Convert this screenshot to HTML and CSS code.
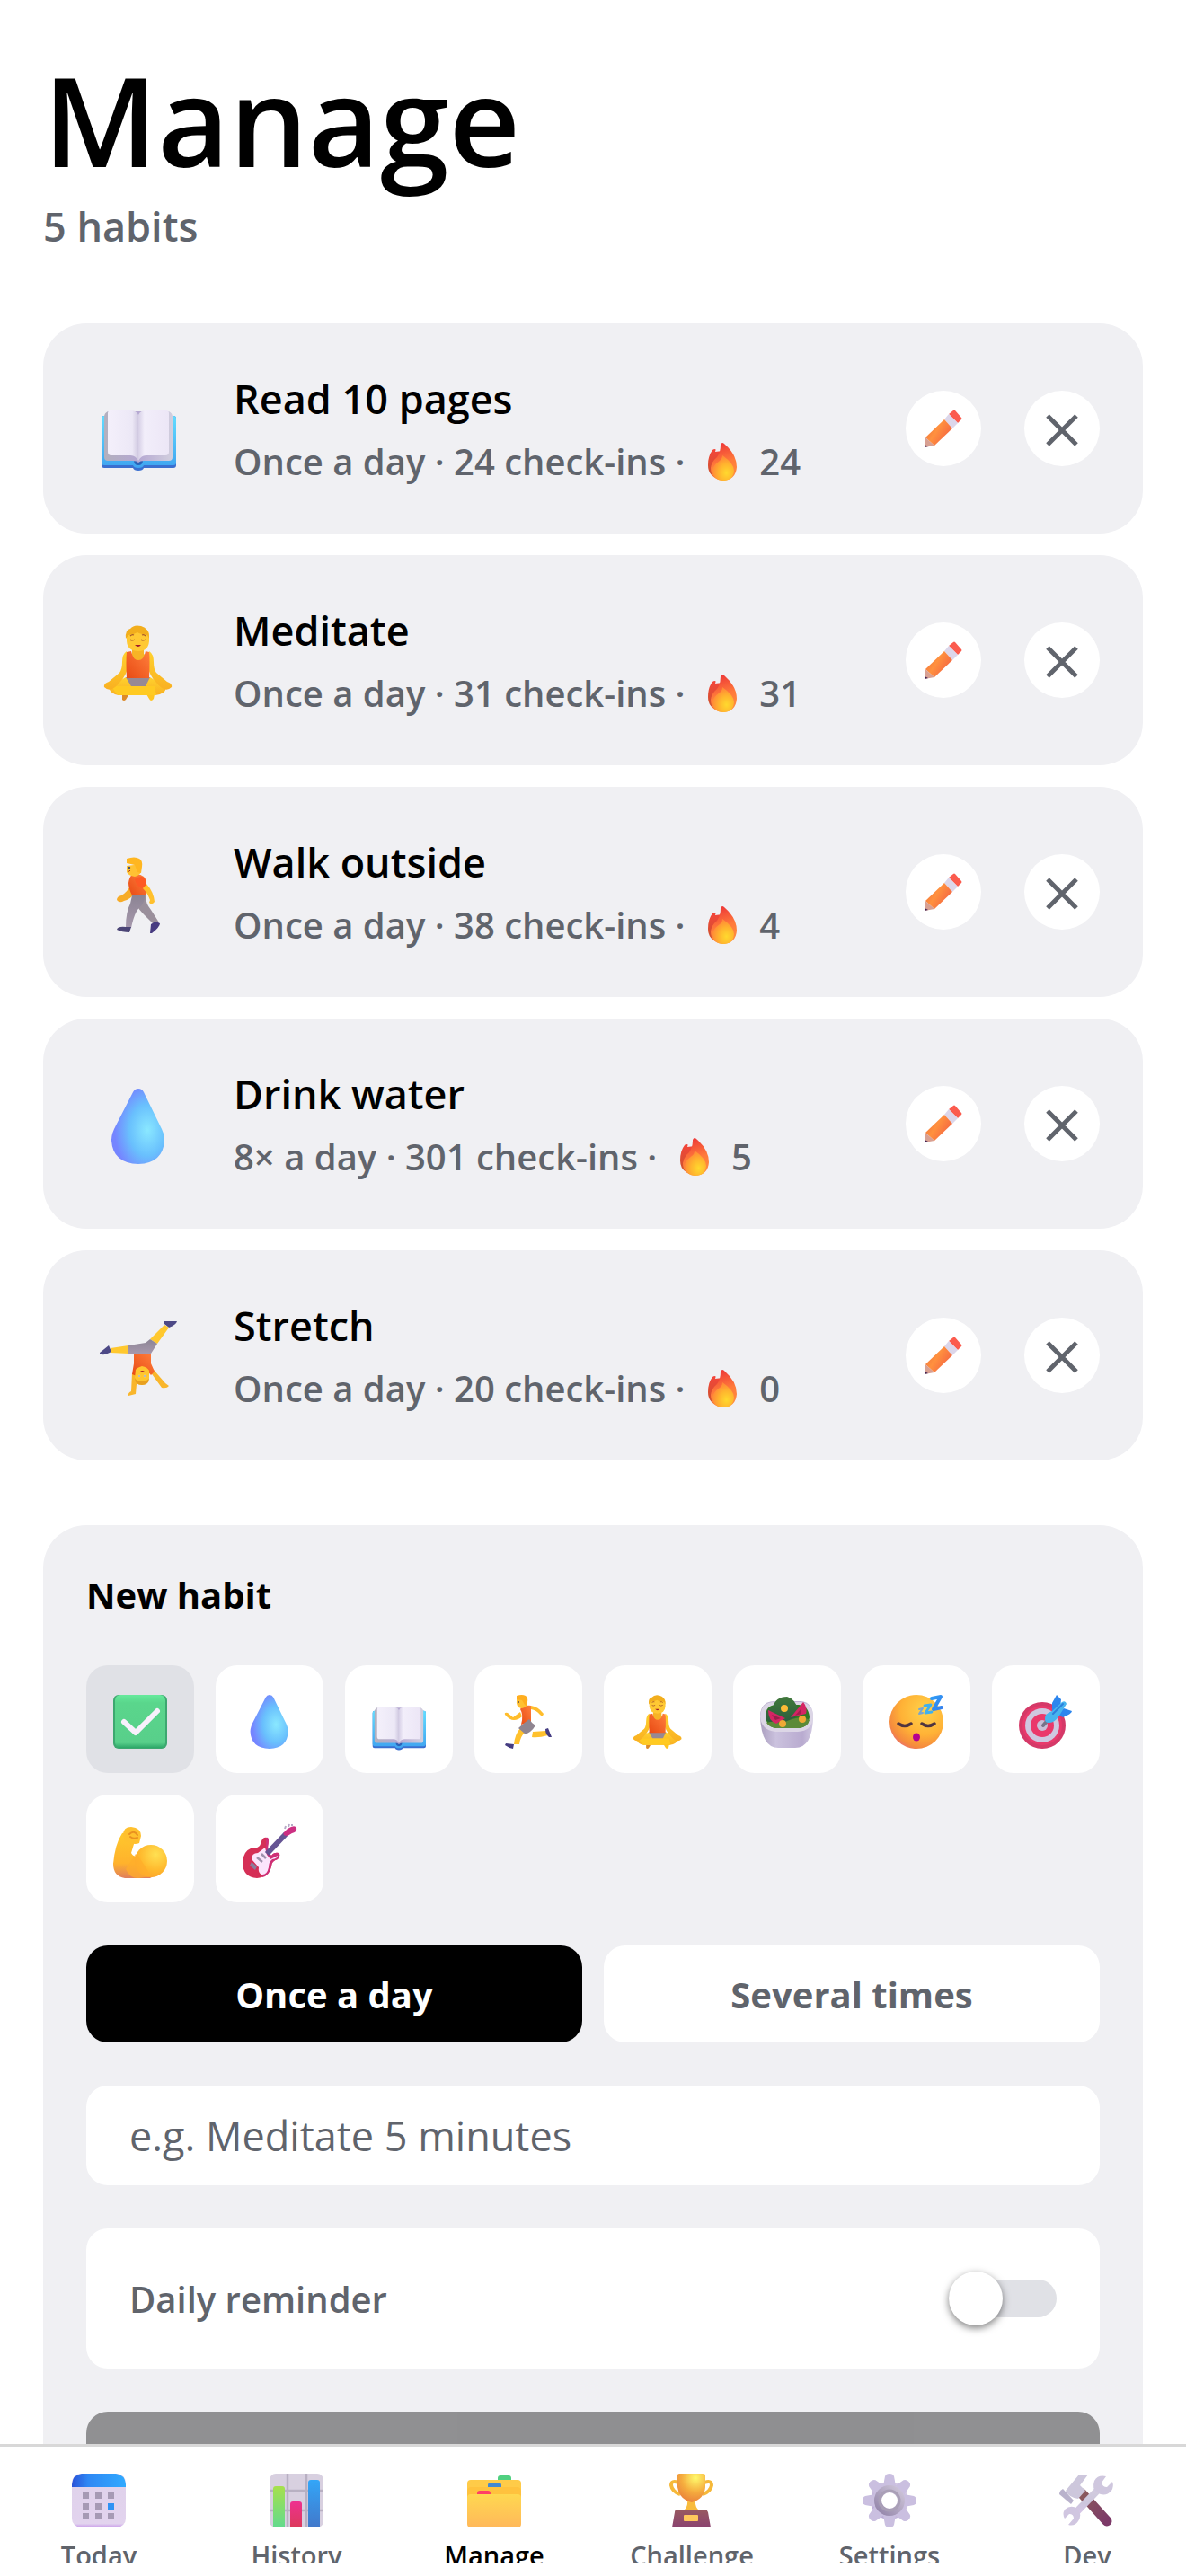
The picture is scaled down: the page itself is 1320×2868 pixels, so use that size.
FILE: index.html
```html
<!DOCTYPE html>
<html lang="en">
  <head>
    <meta charset="UTF-8" />
    <meta name="viewport" content="width=device-width, initial-scale=1.0" />
    <title>Manage habits</title>
    <link rel="stylesheet" href="styles.css">
  </head>
  <body>
    <!-- icon sprite -->
    <svg class="sprite" aria-hidden="true">
      <defs>
        <linearGradient id="g-cover" x1="0" y1="0" x2="0" y2="1"><stop offset="0" stop-color="#62dcff" /><stop offset="1" stop-color="#3fa4f0" /></linearGradient>
        <linearGradient id="g-page" x1="0" y1="0" x2="1" y2="0"><stop offset="0" stop-color="#f4f0fb" /><stop offset=".8" stop-color="#ece8f6" /><stop offset="1" stop-color="#cfc8e0" /></linearGradient>
        <linearGradient id="g-page2" x1="0" y1="0" x2="1" y2="0"><stop offset="0" stop-color="#d6cfe6" /><stop offset=".2" stop-color="#f2eefa" /><stop offset="1" stop-color="#ece6f6" /></linearGradient>
        <linearGradient id="g-edge" x1="0" y1="0" x2="1" y2="0"><stop offset="0" stop-color="#b3b0be" /><stop offset=".5" stop-color="#b5a8d2" /><stop offset="1" stop-color="#d2cfde" /></linearGradient>
        <linearGradient id="g-skin" x1="0" y1="0" x2="0" y2="1"><stop offset="0" stop-color="#ffd22e" /><stop offset="1" stop-color="#f9b021" /></linearGradient>
        <linearGradient id="g-shirt" x1="1" y1="0" x2="0" y2="1"><stop offset="0" stop-color="#ff7f3c" /><stop offset="1" stop-color="#e84a14" /></linearGradient>
        <linearGradient id="g-pants" x1="0" y1="0" x2="0" y2="1"><stop offset="0" stop-color="#8c8494" /><stop offset="1" stop-color="#a698ac" /></linearGradient>
        <radialGradient id="g-drop" cx=".68" cy=".55" r=".62"><stop offset="0" stop-color="#8ae8ff" /><stop offset=".55" stop-color="#69c0fd" /><stop offset="1" stop-color="#7585ff" /></radialGradient>
        <linearGradient id="g-fire" x1=".5" y1="0" x2=".7" y2="1"><stop offset="0" stop-color="#ee3a38" /><stop offset=".5" stop-color="#ff7a3a" /><stop offset="1" stop-color="#ff9040" /></linearGradient>
        <linearGradient id="g-fire2" x1="0" y1="0" x2="0" y2="1"><stop offset="0" stop-color="#f4453a" /><stop offset="1" stop-color="#c8552c" /></linearGradient>
        <radialGradient id="g-fire3" cx=".65" cy=".7" r=".7"><stop offset="0" stop-color="#ffd92e" /><stop offset=".5" stop-color="#ffb52e" /><stop offset="1" stop-color="#ff8438" /></radialGradient>
        <linearGradient id="g-pencil" x1="0" y1=".2" x2="1" y2=".8"><stop offset="0" stop-color="#f0703a" /><stop offset=".4" stop-color="#ff913f" /><stop offset="1" stop-color="#f25a42" /></linearGradient>
        <linearGradient id="g-check" x1="0" y1="0" x2="0" y2="1"><stop offset="0" stop-color="#66ea9c" /><stop offset=".15" stop-color="#5ad68c" /><stop offset=".9" stop-color="#58cf8a" /><stop offset="1" stop-color="#2ca768" /></linearGradient>
        <linearGradient id="g-bowl" x1="0" y1="0" x2="1" y2="0"><stop offset="0" stop-color="#ab9fc0" /><stop offset=".3" stop-color="#cbc2de" /><stop offset=".8" stop-color="#b9abd0" /><stop offset="1" stop-color="#d2cae2" /></linearGradient>
        <linearGradient id="g-leaf" x1="0" y1="0" x2="0" y2="1"><stop offset="0" stop-color="#41793c" /><stop offset="1" stop-color="#2a5c3c" /></linearGradient>
        <radialGradient id="g-face" cx=".65" cy=".3" r=".8"><stop offset="0" stop-color="#ffd24a" /><stop offset=".55" stop-color="#ffb236" /><stop offset=".85" stop-color="#f58a3e" /><stop offset="1" stop-color="#e86a7c" /></radialGradient>
        <linearGradient id="g-zed" x1="0" y1="0" x2="1" y2="1"><stop offset="0" stop-color="#2f9cf5" /><stop offset="1" stop-color="#3480ee" /></linearGradient>
        <linearGradient id="g-arm" x1="0" y1="0" x2="0" y2="1"><stop offset="0" stop-color="#ffcb2d" /><stop offset=".7" stop-color="#ffb22c" /><stop offset="1" stop-color="#e07f5c" /></linearGradient>
        <radialGradient id="g-bicep" cx=".65" cy=".3" r=".7"><stop offset="0" stop-color="#ffe052" /><stop offset=".7" stop-color="#ffb92d" /><stop offset="1" stop-color="#fca92c" /></radialGradient>
        <linearGradient id="g-calhead" x1="0" y1="0" x2="1" y2="0"><stop offset="0" stop-color="#2a52d8" /><stop offset=".3" stop-color="#2f88f4" /><stop offset="1" stop-color="#30aaff" /></linearGradient>
        <linearGradient id="g-cal" x1="0" y1="0" x2="0" y2="1"><stop offset="0" stop-color="#dfd2ea" /><stop offset=".93" stop-color="#e2d3ee" /><stop offset="1" stop-color="#c797ea" /></linearGradient>
        <linearGradient id="g-barg" x1="0" y1="0" x2="0" y2="1"><stop offset="0" stop-color="#a6e04c" /><stop offset="1" stop-color="#62da8e" /></linearGradient>
        <linearGradient id="g-barr" x1="0" y1="0" x2="0" y2="1"><stop offset="0" stop-color="#ee3190" /><stop offset="1" stop-color="#dc3a5a" /></linearGradient>
        <linearGradient id="g-barb" x1="0" y1="0" x2="0" y2="1"><stop offset="0" stop-color="#33a6f8" /><stop offset="1" stop-color="#4278ca" /></linearGradient>
        <linearGradient id="g-folder" x1="0" y1="0" x2="0" y2="1"><stop offset="0" stop-color="#ffd850" /><stop offset="1" stop-color="#ffb85a" /></linearGradient>
        <radialGradient id="g-cup" cx=".65" cy=".15" r=".9"><stop offset="0" stop-color="#fffa6c" /><stop offset=".55" stop-color="#f5ac3e" /><stop offset="1" stop-color="#e97e3c" /></radialGradient>
        <linearGradient id="g-base" x1="0" y1="0" x2="0" y2="1"><stop offset="0" stop-color="#985a60" /><stop offset="1" stop-color="#8a4270" /></linearGradient>
        <linearGradient id="g-gear" x1="1" y1="0" x2="0" y2="1"><stop offset="0" stop-color="#dad2e8" /><stop offset="1" stop-color="#b7a6d4" /></linearGradient>
        <linearGradient id="g-hub" x1="1" y1="0" x2="0" y2="1"><stop offset="0" stop-color="#cdc4d8" /><stop offset="1" stop-color="#9486aa" /></linearGradient>
        <linearGradient id="g-handle" x1="0" y1="0" x2="1" y2="1"><stop offset="0" stop-color="#8b5a5c" /><stop offset="1" stop-color="#7c3968" /></linearGradient>
        <linearGradient id="g-wrench" x1="0" y1="0" x2="0" y2="1"><stop offset="0" stop-color="#d4cfdf" /><stop offset=".6" stop-color="#ccc5dc" /><stop offset="1" stop-color="#d8c6ea" /></linearGradient>
      </defs>

      <symbol id="i-book" viewBox="0 0 84 84">
        <path d="M1 28q0-3 3-3h77q3 0 3 3v52q0 3-3 3H48q-1 3-6 3t-6-3H4q-3 0-3-3z" fill="#3a6fd0" />
        <path d="M1 28q0-3 3-3h77q3 0 3 3v49q0 3-3 3H48q-1 3-6 3t-6-3H4q-3 0-3-3z" fill="url(#g-cover)" />
        <path d="M37 74h10q0 6-5 6t-5-6z" fill="#2b62b8" />
        <path d="M4 26q0-4 4-6h68q4 2 4 6v45q0 4-4 4H48q-4 0-6 2-2-2-6-2H8q-4 0-4-4z" fill="url(#g-edge)" />
        <path d="M8 22q0-3 3-3h22q7 0 9 5v51q-3-6-9-6H12q-4 0-4-4z" fill="url(#g-page)" />
        <path d="M76 22q0-3-3-3H51q-7 0-9 5v51q3-6 9-6h21q4 0 4-4z" fill="url(#g-page2)" />
      </symbol>

      <symbol id="i-meditate" viewBox="0 0 84 84">
        <path d="M24 78h7l-3 5q-2 2-4 0z" fill="#dc8a28" />
        <path d="M51 77h9l-1 5q-3 4-5 0z" fill="#ffc521" />
        <path d="M28 58h27l18 11q-1 8-12 9H20q-9-1-11-9z" fill="url(#g-skin)" />
        <path d="M28 58h27l-5 10H34z" fill="#978994" />
        <path d="M13 68h47l2 10H20q-4-1-7-10z" fill="#ffca22" />
        <path d="M29 29q-5 3-5 12 0 8-3 12L9 63q-6 2-5 6 4 4 9 2 4-2 8-7 8-8 10-20z" fill="url(#g-skin)" />
        <path d="M54 29q5 3 5 12 0 8 3 12l12 10q6 2 5 6-4 4-9 2-4-2-8-7-8-8-10-20z" fill="url(#g-skin)" />
        <path d="M35 24h13v8l5 4q-11 8-23 0l5-4z" fill="#f7b426" />
        <path d="M29 30l5-1q2 10 8 10t8-10l4 1q1 8 0 29H29q-1-20 0-29z" fill="url(#g-shirt)" />
        <path d="M29 11q0-8 13-8 12 0 12 8v7q-1 11-12 11-12 0-13-11z" fill="#ffc933" />
        <path d="M28 15Q27 5 33 4q4-5 12-3 9 2 9 14l-2-4q-8-1-11-3-5 3-10 3z" fill="#f2ae1d" />
        <path d="M33 16q2 2 5 0m7 0q2 2 5 0M33 12q2-2 4-1m9 0q2-1 4 1" fill="none" stroke="#a8582a" stroke-width="1.2" />
        <path d="M38 22h7q-3 4-7 0z" fill="#a01c2a" />
      </symbol>

      <symbol id="i-walk" viewBox="0 0 84 84">
        <path d="M33 32l6 7q-5 8-13 10-5 3-8-1 0-4 5-5 7-4 10-11z" fill="#f7ac28" />
        <path d="M40 43h10q0 9 6 16l9 14-4 4-14-14q-7-7-10-16z" fill="#9a8f9b" />
        <path d="M35 43h14q0 8-5 13-6 4-10 23h-6q0-18 5-27z" fill="url(#g-pants)" />
        <path d="M28 78h6l-2 6q-8 0-14-3 1-4 10-3z" fill="#4b4576" />
        <path d="M61 72l5 2q0 4-9 11h-2l1-10z" fill="#473b80" />
        <path d="M35 20q8-2 13 2 4 4 2 11v10H35q-4-8-4-14 1-7 4-9z" fill="url(#g-shirt)" />
        <path d="M51 30q8 9 9 20-3 4-6 1l1-3q-3-8-8-13z" fill="#ffc02c" />
        <path d="M38 25q12-8 13 6l-5 4q-6-2-8-10z" fill="#fd5a25" />
        <path d="M29 10l16-2v9q-2 4-7 5-7-1-9-5z" fill="#ffc233" />
        <path d="M29 2q9-3 14 0 4 2 3 9l-1 7-4-1-3-8-9-2z" fill="#ffb620" />
        <circle cx="32" cy="12" r="1.2" fill="#40506a" />
        <path d="M30 16q2 1 3-1" fill="none" stroke="#a03020" />
      </symbol>

      <symbol id="i-drop" viewBox="0 0 84 84">
        <path d="M42 0q4 0 6 4l18 37q5 9 5 16-1 26-29 27Q13 83 12 57q0-7 5-16L36 4q2-4 6-4z" fill="url(#g-drop)" />
      </symbol>

      <symbol id="i-stretch" viewBox="0 0 84 84">
        <path d="M71 1h14q-1 4-9 7l-5-4zM-1 36l10-8 3 7q-9 5-13 2z" fill="#4d4986" />
        <path d="M71 5l5 3-13 18-8-5zM11 31l20-3v9l-20-1z" fill="#ffc82e" />
        <path d="M55 21l8 5-7 11H31v-9l19-3z" fill="url(#g-pants)" />
        <path d="M35 59l6 1-2 22-8 2q-1-3 3-5zM55 57l4-2 13 15 4 3q-2 3-8 2z" fill="#f9b62b" />
        <path d="M37 37h19v11l4 9-4 4-5-6H41l-1 7-5-2 2-12z" fill="url(#g-shirt)" />
        <path d="M39 55q1-2 7-4 6 1 8 5v8q-2 8-8 8-7 0-8-8z" fill="#ffc62f" />
        <path d="M38 64q2 4 8 4t8-4q0 8-8 8t-8-8z" fill="#e8a020" />
        <path d="M44 57q2-2 5 0z" fill="#a82030" />
        <circle cx="43" cy="62" r="1.2" fill="#fff" /><circle cx="49" cy="62" r="1.2" fill="#fff" />
        <circle cx="43" cy="62" r=".7" fill="#3a4260" /><circle cx="49" cy="62" r=".7" fill="#3a4260" />
      </symbol>

      <symbol id="i-fire" viewBox="0 0 42 42">
        <path d="M13 7q1 0 0 3l8-1-4 31Q5 37 5 25 5 14 10 8q1-1 3-1z" fill="url(#g-fire2)" />
        <path d="M21 0q1 0 2 1 14 12 14 26-1 14-15 15Q8 41 8 28q1-7 7-12 4-5 4-14 1-2 2-2z" fill="url(#g-fire)" />
        <path d="M21 14q13 9 13 17-1 11-12 11T10 30q1-5 8-10 3-2 3-6z" fill="url(#g-fire3)" />
      </symbol>

      <symbol id="i-pencil" viewBox="0 0 42 42">
        <path d="M32 1q1-1 2 0l7 8q1 1 0 2l-4 4-10-10z" fill="#fb5b4e" />
        <path d="M27 5l10 10-6 6-9-10z" fill="#dcd6ea" />
        <path d="M22 11l9 10-20 19-10-9z" fill="url(#g-pencil)" />
        <path d="M1 31l10 9-11 2z" fill="#d8a092" />
        <path d="M0 39l4 2-4 1z" fill="#3c1f52" />
      </symbol>

      <symbol id="i-close" viewBox="0 0 36 36">
        <path d="M2 2l32 32M34 2L2 34" fill="none" stroke="#60646c" stroke-width="5" />
      </symbol>

      <symbol id="i-check" viewBox="0 0 60 60">
        <rect width="60" height="60" rx="6" fill="#3da870" />
        <rect x="2" width="56" height="59" rx="6" fill="url(#g-check)" />
        <path d="M12 30l13 12 24-24" fill="none" stroke="#f8f0fc" stroke-width="6" stroke-linecap="round" stroke-linejoin="round" />
      </symbol>

      <symbol id="i-run" viewBox="0 0 60 60">
        <path d="M21 19l-8 6-6-5q-4-1-3 2 5 6 10 6 5 0 9-4zM33 12q8 1 14 9-1 4-4 1-4-5-10-6z" fill="#ffbd2c" />
        <path d="M21 37l6 4q-6 5-7 14h-6q1-11 7-18zM35 41l15-1 2 5q-11 3-18 2z" fill="#ffc12d" />
        <path d="M5 54l9 1-1 5q-5-1-9-4zM49 38l3-1 4 10h-3q-4-3-4-9z" fill="#453d82" />
        <path d="M23 13q7-2 10-1v18l-11 3q3-11-1-17z" fill="url(#g-shirt)" />
        <path d="M31 27q3 5 7 7-3 5-6 7l-5 3-8-7q5-5 12-10z" fill="#8f8591" />
        <path d="M17 5l12-3v9q-3 4-7 4-6-1-5-10z" fill="#ffc032" />
        <path d="M17 1q6-2 10 0 3 2 2 7v5l-3-2-3-5-6-1z" fill="#ffae1f" />
        <circle cx="19" cy="8" r=".9" fill="#3f3a50" />
      </symbol>

      <symbol id="i-salad" viewBox="0 0 60 60">
        <path d="M0 25q0-17 15-18h30q14 1 14 18-1 34-20 34H20Q2 59 0 25z" fill="url(#g-bowl)" />
        <path d="M0 24Q1 8 16 8h28q15 1 15 17-1 15-17 16H17Q1 39 0 24z" fill="#dcd6e6" />
        <path d="M6 24q0-12 11-13h26q11 1 12 14-1 11-12 12H18Q7 36 6 24z" fill="#2f7a22" />
        <path d="M6 24q2-11 8-10 3-12 16-12 9 2 13 16L36 31H12q-6-2-6-7z" fill="url(#g-leaf)" />
        <path d="M7 31q10-3 18 1 10-7 24-7l6 3q-2 8-12 9H18q-8-1-11-6z" fill="#5c8a38" />
        <path d="M9 17l19 9-10 6q-9-3-9-15z" fill="#d42564" /><path d="M13 22l10 4-6 2z" fill="#981f49" />
        <path d="M48 8q5 6 3 13l-17 4z" fill="#d42564" /><path d="M46 15v6l-7 2z" fill="#a31f4e" />
        <circle cx="27" cy="15" r="4" fill="#fdbb36" /><circle cx="25" cy="32" r="4" fill="#efa935" /><circle cx="47" cy="27" r="4" fill="#efa935" />
      </symbol>

      <symbol id="i-sleep" viewBox="0 0 60 60">
        <circle cx="30" cy="30" r="30" fill="url(#g-face)" />
        <path d="M10 32q7 5 14 0M36 32q7 5 14 0" fill="none" stroke="#4f3440" stroke-width="3.4" stroke-linecap="round" />
        <ellipse cx="30" cy="47" rx="4" ry="4.5" fill="#b5008e" />
        <g fill="none" stroke-linejoin="round" stroke-linecap="round">
          <path d="M47 4l10-2-8 14 9-2" stroke="url(#g-zed)" stroke-width="4" />
          <path d="M39 12l7-1-6 9 7-1" stroke="#3fb0ee" stroke-width="2.8" />
          <path d="M33 16l4-1-4 6 4-1" stroke="#79a5d2" stroke-width="2" />
        </g>
      </symbol>

      <symbol id="i-target" viewBox="0 0 60 60">
        <circle cx="26" cy="34" r="26" fill="#d53968" />
        <circle cx="26" cy="34" r="22" fill="#e83a6c" />
        <circle cx="26" cy="34" r="19" fill="#cfc7e0" />
        <circle cx="26" cy="34" r="13" fill="#ea386b" />
        <circle cx="26" cy="34" r="6" fill="#c9bfd8" />
        <path d="M27 34l6-7" stroke="#77738a" stroke-width="4" stroke-linecap="round" />
        <path d="M42 0l5 5-1 9-9 5V9zM50 15l9 3q0 3-10 7l-8-4z" fill="#2d86ee" />
        <path d="M29 27q-1-6 8-9l11-10q4-2 5 2l-8 13q-6 9-12 8-4 0-4-4z" fill="#47b4ee" />
        <path d="M49 10L38 21" stroke="#2c7fdc" stroke-width="2" stroke-linecap="round" />
      </symbol>

      <symbol id="i-muscle" viewBox="0 0 60 60">
        <path d="M14 9q6-8 13 0l-7 23q4 8 30 8 8 12-9 20H13Q0 58 0 44q2-22 10-34z" fill="url(#g-arm)" />
        <circle cx="42" cy="41" r="18" fill="url(#g-bicep)" />
        <path d="M14 50l11-17q5 4 17 25L28 60q-10 0-14-10z" fill="#ffae2b" opacity=".75" />
        <path d="M11 12q0-9 9-9 11 1 11 10l-2 8q-4 2-10 0l-6-2z" fill="#ffc02e" />
        <path d="M18 11q5-5 9 1m-8 2q4 3 8 1" fill="none" stroke="#ea9120" stroke-width="2" stroke-linecap="round" />
      </symbol>

      <symbol id="i-guitar" viewBox="0 0 60 60">
        <path d="M47 5l1-3M51 3l1-3M55 2V0" stroke="#b5aac6" stroke-width="2" />
        <path d="M0 42q1-12 9-15 10 0 11-5 2-9 7-7 3 2 1 9l-1 8 5 3q3-4 8-3 3 2-1 7-7 2-7 8-3 12-16 13Q0 59 0 42z" fill="#d52f56" />
        <path d="M26 15q3-1 3 3l-1 11 4 6q3-4 8-3 3 2-1 7-7 2-7 8-2 10-10 12l4-30z" fill="#cf2f76" />
        <path d="M10 39q0-7 7-7l8-6 2 8 4 5 8-4q0 3-6 4-4 3-4 9-2 9-8 8-4-2-3-8z" fill="#fbe5fc" />
        <path d="M27 33L48 11" stroke="#655493" stroke-width="6" />
        <path d="M46 9l4-4q8-5 10-1 1 5-5 6l-5 3q-6 0-4-4z" fill="#cc2f82" />
        <path d="M10 42l6 5-2 4-6-5z" fill="#8a7e9b" />
        <path d="M16 37l6 5M21 33l5 5" stroke="#9f92ad" stroke-width="2.5" />
      </symbol>

      <symbol id="i-calendar" viewBox="0 0 60 60">
        <rect width="60" height="60" rx="10" fill="url(#g-cal)" />
        <path d="M0 15V12Q1 1 11 0h38q10 1 11 12v3z" fill="url(#g-calhead)" />
        <path d="M12 21h7v7h-7zM26 21h7v7h-7zM40 21h7v7h-7zM12 33h7v7h-7zM26 33h7v7h-7zM12 44h7v7h-7zM26 44h7v7h-7zM40 44h7v7h-7z" fill="#a69ab4" />
        <path d="M40 33h7v7h-7z" fill="#2f92f4" />
      </symbol>

      <symbol id="i-chart" viewBox="0 0 60 60">
        <rect width="60" height="60" rx="7" fill="#d8d0e0" />
        <path d="M20 0v60M41 0v60M0 19h60M0 41h60" stroke="#b8b0c2" stroke-width="2.5" />
        <path d="M4 60V17q0-3 3-3h7q3 0 3 3v43z" fill="url(#g-barg)" />
        <path d="M23 60V34q0-3 3-3h7q3 0 3 3v26z" fill="url(#g-barr)" />
        <path d="M43 60V10q0-3 3-3h7q3 0 3 3v50z" fill="url(#g-barb)" />
      </symbol>

      <symbol id="i-folder" viewBox="0 0 60 60">
        <path d="M34 8V5q0-3 3-3h9q3 0 3 3v3z" fill="#50d080" />
        <rect y="7" width="60" height="30" rx="4" fill="#ffcb48" />
        <path d="M23 16v-3q0-3 3-3h9q3 0 3 3v3z" fill="#4288d2" />
        <path d="M0 19q1-4 4-4h52q3 0 4 4v10H0z" fill="#ffc23e" />
        <path d="M11 25v-3q0-3 3-3h9q3 0 3 3v3z" fill="#ff3f66" />
        <rect y="23" width="60" height="37" rx="4" fill="url(#g-folder)" />
      </symbol>

      <symbol id="i-trophy" viewBox="0 0 60 60">
        <path d="M15 10q-8-3-8 3 1 7 10 10M44 10q8-3 8 3-1 7-10 10" fill="none" stroke="#f6b93a" stroke-width="4" />
        <path d="M25 29h9q-1 8 4 12H21q5-4 4-12z" fill="#f8bb3c" />
        <path d="M14 2q0-2 2-2h26q3 0 3 2v13q-1 13-15 17-14-3-16-17z" fill="url(#g-cup)" />
        <path d="M11 43q0-3 3-3h31q2 0 3 3l3 17H8z" fill="url(#g-base)" />
        <rect x="21" y="46" width="16" height="7" rx="1" fill="#ffc75c" />
      </symbol>

      <symbol id="i-gear" viewBox="0 0 60 60">
        <g fill="#cabfe0">
          <circle cx="30" cy="30" r="21" fill="url(#g-gear)" />
          <path id="tooth" d="M23 14l2-11q1-3 5-3t5 3l2 11z" />
          <use href="#tooth" transform="rotate(45 30 30)" />
          <use href="#tooth" transform="rotate(90 30 30)" />
          <use href="#tooth" transform="rotate(135 30 30)" />
          <use href="#tooth" transform="rotate(180 30 30)" />
          <use href="#tooth" transform="rotate(225 30 30)" />
          <use href="#tooth" transform="rotate(270 30 30)" />
          <use href="#tooth" transform="rotate(315 30 30)" />
        </g>
        <circle cx="30" cy="30" r="13" fill="#fff" stroke="url(#g-hub)" stroke-width="8" />
        <circle cx="30" cy="30" r="11" fill="none" stroke="#a99fb6" stroke-width="3" />
      </symbol>

      <symbol id="i-tools" viewBox="0 0 60 60">
        <path d="M24 22l28 31" stroke="url(#g-handle)" stroke-width="11" stroke-linecap="round" />
        <path d="M21 1h10l-9 12 6 6-8 9q-10-1-14-9z" fill="#cdc7dc" />
        <path d="M3 17l12 13-3 4L-1 23q0-4 4-6z" fill="#b9b2cc" />
        <path d="M15 46L46 14" stroke="url(#g-wrench)" stroke-width="8" />
        <path d="M51 3q-9-2-13 5-3 9 3 13 9 6 16-2 3-5 1-10l-6 6q-5 0-6-5z" fill="#cfc7de" />
        <path d="M9 57q7 2 11-4 5-8-1-14-7-5-14 1-3 5 0 10l5-5q5 0 5 5z" fill="#d0c6e0" />
      </symbol>
    </svg>

    <main class="screen">
      <header class="page-header">
        <h1>Manage</h1>
        <p>5 habits</p>
      </header>

      <ul class="habit-list">
        <li class="habit">
          <svg class="habit-icon"><use href="#i-book" /></svg>
          <div class="habit-text">
            <h2>Read 10 pages</h2>
            <p>Once a day · 24 check-ins · <svg class="fire"><use href="#i-fire" /></svg> 24</p>
          </div>
          <div class="habit-actions">
            <button class="round-button" aria-label="Edit Read 10 pages"><svg class="pencil"><use href="#i-pencil" /></svg></button>
            <button class="round-button" aria-label="Delete Read 10 pages"><svg class="close"><use href="#i-close" /></svg></button>
          </div>
        </li>
        <li class="habit">
          <svg class="habit-icon"><use href="#i-meditate" /></svg>
          <div class="habit-text">
            <h2>Meditate</h2>
            <p>Once a day · 31 check-ins · <svg class="fire"><use href="#i-fire" /></svg> 31</p>
          </div>
          <div class="habit-actions">
            <button class="round-button" aria-label="Edit Meditate"><svg class="pencil"><use href="#i-pencil" /></svg></button>
            <button class="round-button" aria-label="Delete Meditate"><svg class="close"><use href="#i-close" /></svg></button>
          </div>
        </li>
        <li class="habit">
          <svg class="habit-icon"><use href="#i-walk" /></svg>
          <div class="habit-text">
            <h2>Walk outside</h2>
            <p>Once a day · 38 check-ins · <svg class="fire"><use href="#i-fire" /></svg> 4</p>
          </div>
          <div class="habit-actions">
            <button class="round-button" aria-label="Edit Walk outside"><svg class="pencil"><use href="#i-pencil" /></svg></button>
            <button class="round-button" aria-label="Delete Walk outside"><svg class="close"><use href="#i-close" /></svg></button>
          </div>
        </li>
        <li class="habit">
          <svg class="habit-icon"><use href="#i-drop" /></svg>
          <div class="habit-text">
            <h2>Drink water</h2>
            <p>8× a day · 301 check-ins · <svg class="fire"><use href="#i-fire" /></svg> 5</p>
          </div>
          <div class="habit-actions">
            <button class="round-button" aria-label="Edit Drink water"><svg class="pencil"><use href="#i-pencil" /></svg></button>
            <button class="round-button" aria-label="Delete Drink water"><svg class="close"><use href="#i-close" /></svg></button>
          </div>
        </li>
        <li class="habit">
          <svg class="habit-icon"><use href="#i-stretch" /></svg>
          <div class="habit-text">
            <h2>Stretch</h2>
            <p>Once a day · 20 check-ins · <svg class="fire"><use href="#i-fire" /></svg> 0</p>
          </div>
          <div class="habit-actions">
            <button class="round-button" aria-label="Edit Stretch"><svg class="pencil"><use href="#i-pencil" /></svg></button>
            <button class="round-button" aria-label="Delete Stretch"><svg class="close"><use href="#i-close" /></svg></button>
          </div>
        </li>
      </ul>

      <form class="new-habit">
        <h2>New habit</h2>
        <div class="icon-picker">
          <button type="button" class="icon-option selected" aria-label="Check mark" aria-pressed="true"><svg><use href="#i-check" /></svg></button>
          <button type="button" class="icon-option" aria-label="Droplet"><svg><use href="#i-drop" /></svg></button>
          <button type="button" class="icon-option" aria-label="Book"><svg><use href="#i-book" /></svg></button>
          <button type="button" class="icon-option" aria-label="Running"><svg><use href="#i-run" /></svg></button>
          <button type="button" class="icon-option" aria-label="Meditation"><svg><use href="#i-meditate" /></svg></button>
          <button type="button" class="icon-option" aria-label="Salad"><svg><use href="#i-salad" /></svg></button>
          <button type="button" class="icon-option" aria-label="Sleep"><svg><use href="#i-sleep" /></svg></button>
          <button type="button" class="icon-option" aria-label="Target"><svg><use href="#i-target" /></svg></button>
          <button type="button" class="icon-option" aria-label="Muscle"><svg><use href="#i-muscle" /></svg></button>
          <button type="button" class="icon-option" aria-label="Guitar"><svg><use href="#i-guitar" /></svg></button>
        </div>
        <div class="frequency">
          <button type="button" class="frequency-button active" aria-pressed="true">Once a day</button>
          <button type="button" class="frequency-button" aria-pressed="false">Several times</button>
        </div>
        <input type="text" class="name-input" aria-label="Habit name" placeholder="e.g. Meditate 5 minutes" />
        <div class="reminder">
          <label for="reminder">Daily reminder</label>
          <input type="checkbox" role="switch" class="switch" id="reminder" />
        </div>
        <button type="submit" class="submit-button" disabled>Add habit</button>
      </form>
    </main>

    <nav class="tab-bar">
      <a href="#today"><svg><use href="#i-calendar" /></svg><span>Today</span></a>
      <a href="#history"><svg><use href="#i-chart" /></svg><span>History</span></a>
      <a href="#manage" class="current" aria-current="page"><svg><use href="#i-folder" /></svg><span>Manage</span></a>
      <a href="#challenge"><svg><use href="#i-trophy" /></svg><span>Challenge</span></a>
      <a href="#settings"><svg><use href="#i-gear" /></svg><span>Settings</span></a>
      <a href="#dev"><svg><use href="#i-tools" /></svg><span>Dev</span></a>
    </nav>
  </body>
</html>
```
FILE: styles.css
```css
* {
  box-sizing: border-box;
  margin: 0;
  padding: 0;
}

body {
  font-family: "Open Sans", "Noto Sans", sans-serif;
  font-weight: 600;
  color: #000;
  background-color: #fff;
  height: 100vh;
  display: flex;
  flex-direction: column;
}

button,
input {
  font: inherit;
  border: none;
}

button {
  cursor: pointer;
}

svg {
  display: block;
  overflow: visible;
}

symbol {
  overflow: visible;
}

.sprite {
  position: absolute;
  width: 0;
  height: 0;
}

.screen {
  flex: 1;
  min-height: 0;
  padding: 48px;
  overflow-y: auto;
  scrollbar-width: none;
}

.page-header {
  margin-bottom: 76px;
}

.page-header h1 {
  font-size: 138px;
  font-weight: 600;
  line-height: 168px;
}

.page-header p {
  margin-top: 4px;
  font-size: 45px;
  line-height: 64px;
  color: #60646c;
}

/* habit cards */
.habit-list {
  list-style: none;
  display: flex;
  flex-direction: column;
  gap: 24px;
}

.habit {
  display: flex;
  align-items: center;
  gap: 48px;
  padding: 48px;
  background-color: #f0f0f3;
  border-radius: 48px;
}

.habit-icon {
  width: 84px;
  height: 84px;
  margin: 6px 16px 0;
}

.habit-text {
  flex: 1;
  padding-top: 2px;
}

.habit-text h2 {
  font-size: 45px;
  font-weight: 600;
  line-height: 68px;
}

.habit-text p {
  margin-top: 4px;
  font-size: 40px;
  line-height: 64px;
  color: #60646c;
}

.fire {
  display: inline-block;
  width: 42px;
  height: 42px;
  margin: 0 10px;
  vertical-align: -6px;
}

.habit-actions {
  display: flex;
  gap: 48px;
}

.round-button {
  display: flex;
  align-items: center;
  justify-content: center;
  width: 84px;
  height: 84px;
  border-radius: 50%;
  background-color: #fff;
}

.pencil {
  width: 42px;
  height: 42px;
}

.close {
  width: 36px;
  height: 36px;
  margin-top: 4px;
}

/* new habit form */
.new-habit {
  display: flex;
  flex-direction: column;
  gap: 48px;
  margin-top: 72px;
  padding: 48px;
  background-color: #f0f0f3;
  border-radius: 48px;
}

.new-habit h2 {
  font-size: 40px;
  font-weight: 700;
  line-height: 60px;
}

.icon-picker {
  display: flex;
  flex-wrap: wrap;
  gap: 24px;
}

.icon-option {
  display: flex;
  align-items: center;
  justify-content: center;
  width: 120px;
  height: 120px;
  padding-top: 6px;
  border-radius: 24px;
  background-color: #fff;
}

.icon-option.selected {
  background-color: #e0e1e6;
}

.icon-option svg {
  width: 60px;
  height: 60px;
}

.frequency {
  display: flex;
  gap: 24px;
}

.frequency-button {
  flex: 1;
  height: 108px;
  border-radius: 24px;
  background-color: #fff;
  color: #60646c;
  font-size: 40px;
  font-weight: 700;
}

.frequency-button.active {
  background-color: #000;
  color: #fff;
}

.name-input {
  width: 100%;
  height: 111px;
  padding: 0 48px;
  border-radius: 24px;
  background-color: #fff;
  font-size: 45px;
  font-weight: 400;
}

.name-input::placeholder {
  color: #60646c;
}

.reminder {
  display: flex;
  align-items: center;
  justify-content: space-between;
  height: 156px;
  padding: 0 48px;
  border-radius: 24px;
  background-color: #fff;
  font-size: 40px;
  color: #60646c;
}

.switch {
  appearance: none;
  display: flex;
  align-items: center;
  width: 120px;
  height: 42px;
  border-radius: 21px;
  background-color: #e0e1e6;
}

.switch::before {
  content: "";
  width: 60px;
  height: 60px;
  border-radius: 50%;
  background-color: #fff;
  box-shadow: 0 3px 9px rgba(0, 0, 0, 0.5);
}

.switch:checked {
  justify-content: flex-end;
  background-color: #000;
}

.submit-button {
  flex-shrink: 0;
  height: 120px;
  border-radius: 24px;
  background-color: #000;
  color: #fff;
  font-size: 45px;
  opacity: 0.4;
}

/* bottom tabs */
.tab-bar {
  display: flex;
  border-top: 3px solid #d8d8d8;
  padding-bottom: 15px;
  background-color: #fff;
}

.tab-bar a {
  flex: 1;
  display: flex;
  flex-direction: column;
  align-items: center;
  gap: 10px;
  height: 129px;
  padding-top: 30px;
  overflow: hidden;
  font-size: 29px;
  line-height: 42px;
  color: #60646c;
  text-decoration: none;
}

.tab-bar svg {
  flex-shrink: 0;
  width: 60px;
  height: 60px;
}

.tab-bar .current {
  color: #000;
}
```
